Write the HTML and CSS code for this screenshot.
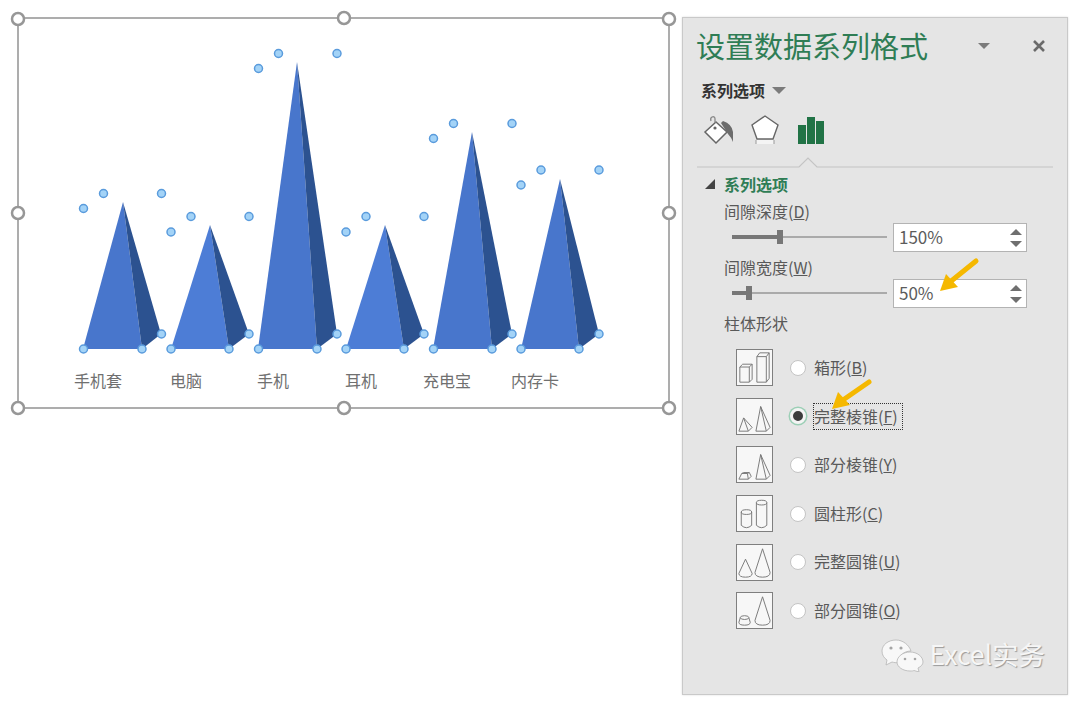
FILE: index.html
```html
<!DOCTYPE html>
<html lang="zh-CN">
<head>
     <meta charset="UTF-8">
     <meta name="viewport" content="width=device-width, initial-scale=1.0">
     <title>设置数据系列格式</title>
     <link rel="stylesheet" href="styles.css">
</head>
<body>
     <div class="stage">
          <!-- 图表 -->
          <svg class="chart" width="680" height="420" viewBox="0 0 680 420">
               <rect class="frame" x="18" y="18" width="651" height="390"/>

               <polygon class="front" points="83,349 142,349 123,202"/>
               <polygon class="side" points="142,349 161,334 123,202"/>
               <polygon class="front lite" points="171,349 229,349 210,225"/>
               <polygon class="side" points="229,349 249,334 210,225"/>
               <polygon class="front" points="258,349 317,349 297,62"/>
               <polygon class="side" points="317,349 337,334 297,62"/>
               <polygon class="front lite" points="346,349 404,349 385,225"/>
               <polygon class="side" points="404,349 424,334 385,225"/>
               <polygon class="front" points="433,349 492,349 472,132"/>
               <polygon class="side" points="492,349 512,334 472,132"/>
               <polygon class="front" points="521,349 579,349 560,179"/>
               <polygon class="side" points="579,349 599,334 560,179"/>

               <g class="points">
                    <circle cx="83.500" cy="208.500" r="4"/><circle cx="103.500" cy="193.500" r="4"/><circle cx="161.500" cy="193.500" r="4"/>
                    <circle cx="83.500" cy="349" r="4"/><circle cx="142" cy="349" r="4"/><circle cx="161.500" cy="334" r="4"/>
                    <circle cx="171" cy="232" r="4"/><circle cx="191" cy="216.500" r="4"/><circle cx="249" cy="216.500" r="4"/>
                    <circle cx="171" cy="349" r="4"/><circle cx="229" cy="349" r="4"/><circle cx="249" cy="334" r="4"/>
                    <circle cx="258.500" cy="68.500" r="4"/><circle cx="278.500" cy="53.500" r="4"/><circle cx="337" cy="53.500" r="4"/>
                    <circle cx="258.500" cy="349" r="4"/><circle cx="317" cy="349" r="4"/><circle cx="337" cy="334" r="4"/>
                    <circle cx="346" cy="232" r="4"/><circle cx="366" cy="216.500" r="4"/><circle cx="424" cy="216.500" r="4"/>
                    <circle cx="346" cy="349" r="4"/><circle cx="404" cy="349" r="4"/><circle cx="424" cy="334" r="4"/>
                    <circle cx="433.500" cy="138.500" r="4"/><circle cx="453.500" cy="123.500" r="4"/><circle cx="512" cy="123.500" r="4"/>
                    <circle cx="433.500" cy="349" r="4"/><circle cx="492" cy="349" r="4"/><circle cx="512" cy="334" r="4"/>
                    <circle cx="521" cy="185" r="4"/><circle cx="541" cy="170" r="4"/><circle cx="599" cy="170" r="4"/>
                    <circle cx="521" cy="349" r="4"/><circle cx="579" cy="349" r="4"/><circle cx="599" cy="334" r="4"/>
               </g>

               <text class="axis" x="74" y="387">手机套</text>
               <text class="axis" x="170" y="387">电脑</text>
               <text class="axis" x="257" y="387">手机</text>
               <text class="axis" x="345" y="387">耳机</text>
               <text class="axis" x="423" y="387">充电宝</text>
               <text class="axis" x="511" y="387">内存卡</text>

               <g class="handles">
                    <circle cx="18" cy="19" r="6"/><circle cx="344" cy="18" r="6"/><circle cx="669" cy="19" r="6"/>
                    <circle cx="18" cy="213" r="6"/><circle cx="669" cy="213" r="6"/>
                    <circle cx="18" cy="408" r="6"/><circle cx="344" cy="408" r="6"/><circle cx="669" cy="408" r="6"/>
               </g>
          </svg>

          <!-- 面板 -->
          <div class="panel">
               <div class="title-row">
                    <div class="title">设置数据系列格式</div>
                    <span class="caret title-caret"></span>
                    <svg class="close" width="12" height="12" viewBox="0 0 12 12"><path d="M1 1 L11 11 M11 1 L1 11"/></svg>
               </div>
               <div class="sub-row">系列选项<span class="caret sub-caret"></span></div>

               <div class="tabs">
                    <svg class="tab-fill" width="31" height="31" viewBox="0 0 31 31">
                         <path d="M13 7 L24 17 L13 28 L2 17 Z" fill="#fff" stroke="#666" stroke-width="1.5"/>
                         <path d="M12 8 V4 Q12 1 9 2 Q7 3 8 6" fill="none" stroke="#888" stroke-width="1.3"/>
                         <circle cx="12" cy="13" r="1.6" fill="#666"/>
                         <path d="M20 6 Q29 9 30 17 L30 27 Q28 22 25 19 L18 8 Z" fill="#6c6c6c"/>
                    </svg>
                    <svg class="tab-shape" width="28" height="30" viewBox="0 0 28 30">
                         <path d="M14 1 L27 10 L22 24 L6 24 L1 10 Z" fill="#fff" stroke="#666" stroke-width="1.4"/>
                         <rect x="5" y="25" width="18" height="4" fill="#f4f4f4"/>
                         <path d="M5 25 V29 M23 25 V29" stroke="#999"/>
                    </svg>
                    <div class="tab-bars"><i class="bar-a"></i><i class="bar-b"></i><i class="bar-c"></i></div>
               </div>

               <svg class="divider" width="356" height="11" viewBox="0 0 356 11">
                    <path d="M0 10 H102 L111 1 L120 10 H356" fill="none" stroke="#c4c4c4" stroke-width="1.2"/>
               </svg>

               <div class="section-head"><span class="corner"></span>系列选项</div>

               <div class="label">间隙深度(<u>D</u>)</div>
               <div class="control">
                    <div class="slider"><i class="fill fill-depth"></i><i class="thumb"></i><i class="rest"></i></div>
                    <div class="spin">
                         <span>150%</span>
                         <div class="arrows"><i class="up"></i><i class="down"></i></div>
                    </div>
               </div>

               <div class="label label-gap">间隙宽度(<u>W</u>)</div>
               <div class="control">
                    <div class="slider"><i class="fill fill-width"></i><i class="thumb"></i><i class="rest"></i></div>
                    <div class="spin">
                         <span>50%</span>
                         <div class="arrows"><i class="up"></i><i class="down"></i></div>
                    </div>
               </div>

               <div class="label label-gap">柱体形状</div>

               <div class="options">
                    <div class="option">
                         <svg class="shape" width="37" height="37" viewBox="0 0 37 37">
                              <path d="M3 18 H13 V34 H3 Z M3 18 L6 15 H16 V31 L13 34 M13 18 L16 15"/>
                              <path d="M21 7 H31 V34 H21 Z M21 7 L24 3 H34 V30 L31 34 M31 7 L34 3"/>
                         </svg>
                         <span class="radio"></span>
                         <span class="text">箱形(<u>B</u>)</span>
                    </div>
                    <div class="option">
                         <svg class="shape" width="37" height="37" viewBox="0 0 37 37">
                              <path d="M7 20 L2 34 H12 L16 30 Z M7 20 L12 34"/>
                              <path d="M25 8 L20 34 H31 L35 30 Z M25 8 L31 34"/>
                         </svg>
                         <span class="radio on"></span>
                         <span class="text focus">完整棱锥(<u>F</u>)</span>
                    </div>
                    <div class="option">
                         <svg class="shape" width="37" height="37" viewBox="0 0 37 37">
                              <path d="M5 28 L2 34 H12 L15 31 L13 27 H7 Z M5 28 H11 L12 34 M11 28 L13 27"/>
                              <path d="M25 8 L20 34 H31 L35 30 Z M25 8 L31 34"/>
                         </svg>
                         <span class="radio"></span>
                         <span class="text">部分棱锥(<u>Y</u>)</span>
                    </div>
                    <div class="option">
                         <svg class="shape" width="37" height="37" viewBox="0 0 37 37">
                              <ellipse cx="10" cy="17" rx="5.5" ry="2.5"/>
                              <path d="M4.500 17 V31 Q10 36 15.500 31 V17"/>
                              <ellipse cx="26" cy="7" rx="5.500" ry="2.500"/>
                              <path d="M20.500 7 V31 Q26 36 31.500 31 V7"/>
                         </svg>
                         <span class="radio"></span>
                         <span class="text">圆柱形(<u>C</u>)</span>
                    </div>
                    <div class="option">
                         <svg class="shape" width="37" height="37" viewBox="0 0 37 37">
                              <path d="M9 15 L2 30 Q2 34 9 34 Q16 34 16 30 Z"/>
                              <path d="M27 4 L19 29 Q19 34 27 34 Q35 34 35 29 Z"/>
                         </svg>
                         <span class="radio"></span>
                         <span class="text">完整圆锥(<u>U</u>)</span>
                    </div>
                    <div class="option">
                         <svg class="shape" width="37" height="37" viewBox="0 0 37 37">
                              <ellipse cx="8" cy="26" rx="4.500" ry="2"/>
                              <path d="M3.500 26 L2 31 Q2 34 8 34 Q14 34 14 31 L12.500 26"/>
                              <path d="M27 4 L19 29 Q19 34 27 34 Q35 34 35 29 Z"/>
                         </svg>
                         <span class="radio"></span>
                         <span class="text">部分圆锥(<u>O</u>)</span>
                    </div>
               </div>

               <div class="mark">
                    <svg width="43" height="33" viewBox="0 0 43 33">
                         <path class="bubble" d="M15 1 C7 1 1 6 1 12 C1 16 3 19 6 21 L5 26 L11 23 C13 23.500 15 24 18 23.500 C17 18 22 12 30 12 C28 6 22 1 15 1 Z"/>
                         <path class="bubble" d="M29 13 C22 13 16 17.500 16 23 C16 28 22 32 29 32 C31 32 32 32 33 31.500 L38 33 L37 29 C40 27.500 42 25.500 42 23 C42 17.500 36 13 29 13 Z"/>
                         <circle class="eye" cx="10" cy="9" r="1.600"/><circle class="eye" cx="20" cy="9" r="1.600"/>
                         <circle class="eye" cx="24" cy="20" r="1.300"/><circle class="eye" cx="34" cy="20" r="1.300"/>
                    </svg>
                    <span>Excel实务</span>
               </div>
          </div>

          <!-- 黄色箭头 -->
          <svg class="marks" width="1080" height="703" viewBox="0 0 1080 703">
               <path class="arrow-line" d="M976 261 L950 282"/>
               <polygon class="arrow-head" points="940,291 946,274 958,287"/>
               <path class="arrow-line" d="M869 382 L843 400"/>
               <polygon class="arrow-head" points="832,409 838,392 850,405"/>
          </svg>
     </div>
</body>
</html>
```

FILE: styles.css
```css
*{
     box-sizing: border-box;
}
html,body{
     margin: 0;
     background: #fff;
}
body{
     font-family: "Noto Sans CJK SC", "Liberation Sans", sans-serif;
     color: #595959;
     font-size: 16px;
}
.stage{
     position: relative;
     width: 1080px;
     height: 703px;
     overflow: hidden;
     display: flex;
     align-items: flex-start;
     padding-top: 17px;
}
.chart{
     display: block;
     flex: none;
     margin-top: -17px;
     margin-right: 2px;
}
.frame{
     fill: #fff;
     stroke: #adadad;
     stroke-width: 2;
}
.front{
     fill: #4876cc;
}
.lite{
     fill: #4d7dd6;
}
.side{
     fill: #2c5290;
}
.points circle{
     fill: #a3d3f7;
     stroke: #5a9bdc;
     stroke-width: 1.5;
}
.handles circle{
     fill: #fff;
     stroke: #979797;
     stroke-width: 2.5;
}
.axis{
     font-size: 16px;
     fill: #707070;
}

/* panel */
.panel{
     flex: none;
     width: 386px;
     height: 678px;
     background: #e5e5e5;
     border: 1px solid #c9c9c9;
     padding: 6px 14px 0;
     box-shadow: 0 0 2px #ddd;
}
.title-row{
     display: flex;
     align-items: center;
     height: 44px;
}
.title{
     font-size: 29px;
     line-height: 42px;
     height: 44px;
     width: 281px;
     margin-left: -1px;
     color: #2f7d55;
     white-space: nowrap;
}
.caret{
     display: inline-block;
     width: 0;
     height: 0;
     border-style: solid;
     border-color: #7b7b7b transparent transparent;
}
.title-caret{
     border-width: 6px 6px 0;
     margin-right: 43px;
     margin-left: 1px;
}
.close{
     fill: none;
     display: block;
}
.close path{
     stroke: #6a6a6a;
     stroke-width: 2.6;
}
.sub-row{
     display: flex;
     align-items: center;
     height: 22px;
     line-height: 18px;
     margin-top: 12px;
     padding: 0 0 2px 4px;
     font-weight: 700;
     color: #333;
}
.sub-caret{
     border-width: 7px 7px 0;
     margin-left: 7px;
}
.tabs{
     display: flex;
     align-items: flex-start;
     height: 31px;
     margin-top: 13px;
     padding-left: 6px;
}
.tab-fill{
     margin-right: 17px;
}
.tab-shape{
     margin-right: 19px;
}
.tab-bars{
     display: flex;
     align-items: flex-end;
     gap: 1px;
     height: 29px;
     padding-top: 2px;
}
.tab-bars i{
     display: block;
     width: 8px;
     background: #217346;
}
.bar-a{
     height: 19px;
}
.bar-b{
     height: 27px;
}
.bar-c{
     height: 23px;
}
.divider{
     display: block;
     margin-top: 11px;
}
.section-head{
     display: flex;
     align-items: center;
     height: 18px;
     line-height: 18px;
     margin-top: 7px;
     margin-bottom: 9px;
     padding-left: 8px;
     font-weight: 700;
     color: #2f7d55;
}
.corner{
     width: 0;
     height: 0;
     border-style: solid;
     border-width: 0 0 10px 10px;
     border-color: transparent transparent #444;
     margin-right: 9px;
}
.label{
     height: 20px;
     line-height: 18px;
     margin-top: 7px;
     padding-left: 27px;
     white-space: nowrap;
}
.label-gap{
     margin-top: 6px;
}
.control{
     display: flex;
     align-items: center;
     height: 29px;
     margin-top: 1px;
     padding-left: 35px;
}
.slider{
     display: flex;
     align-items: center;
     width: 155px;
     margin-right: 6px;
     margin-top: -1px;
}
.slider i{
     display: block;
}
.fill{
     height: 4px;
     background: #777;
}
.fill-depth{
     width: 45px;
}
.fill-width{
     width: 14px;
}
.thumb{
     width: 6px;
     height: 14px;
     background: #777;
}
.rest{
     flex: 1;
     height: 2px;
     background: #aaa;
}
.spin{
     display: flex;
     align-items: center;
     justify-content: space-between;
     width: 134px;
     height: 29px;
     line-height: 22px;
     background: #fff;
     border: 1px solid #b3b3b3;
     padding: 0 4px 2px 5px;
     font-size: 17px;
     color: #5c5c5c;
}
.arrows{
     display: flex;
     flex-direction: column;
     gap: 6px;
     margin-top: 2px;
}
.arrows i{
     display: block;
     width: 0;
     height: 0;
     border-style: solid;
     border-color: transparent;
}
.arrows .up{
     border-width: 0 6px 6px;
     border-bottom-color: #6f6f6f;
}
.arrows .down{
     border-width: 6px 6px 0;
     border-top-color: #6f6f6f;
}
.options{
     display: flex;
     flex-direction: column;
     gap: 11.7px;
     margin-top: 15px;
     padding-left: 39px;
}
.option{
     display: flex;
     align-items: center;
     height: 37px;
}
.shape{
     flex: none;
     background: #f7f7f7;
     border: 1px solid #7f7f7f;
     margin-right: 17px;
}
.shape path,.shape ellipse{
     fill: none;
     stroke: #777;
     stroke-width: 1;
}
.radio{
     flex: none;
     width: 16px;
     height: 16px;
     border-radius: 50%;
     background: #fff;
     border: 1px solid #c4c4c4;
     margin-right: 8px;
}
.radio.on{
     background: #3c3c3c;
     border: 3px solid #f4f4f4;
     box-shadow: 0 0 0 1.5px #9ccfb6;
}
.text{
     white-space: nowrap;
     line-height: 18px;
     margin-top: -2px;
}
.focus{
     border: 1px dotted #333;
     height: 27px;
     padding-top: 3px;
     margin-top: 1px;
     margin-left: -1px;
     width: 90px;
}
.mark{
     display: flex;
     align-items: center;
     justify-content: flex-end;
     gap: 6px;
     margin-top: 10px;
     padding-right: 8px;
     font-size: 26.5px;
     line-height: 30px;
     color: #f6f6f6;
     text-shadow: 1px 1px 1px #9a9a9a;
}
.mark span{
     margin-top: -3px;
}
.mark svg{
     flex: none;
}
.bubble{
     fill: #f8f8f8;
     stroke: #b5b5b5;
     stroke-width: 0.8;
}
.eye{
     fill: #a5a5a5;
}

/* overlay */
.marks{
     position: absolute;
     left: 0;
     top: 0;
     pointer-events: none;
}
.arrow-line{
     fill: none;
     stroke: #f5b800;
     stroke-width: 5;
     stroke-linecap: round;
}
.arrow-head{
     fill: #f5b800;
}
```
